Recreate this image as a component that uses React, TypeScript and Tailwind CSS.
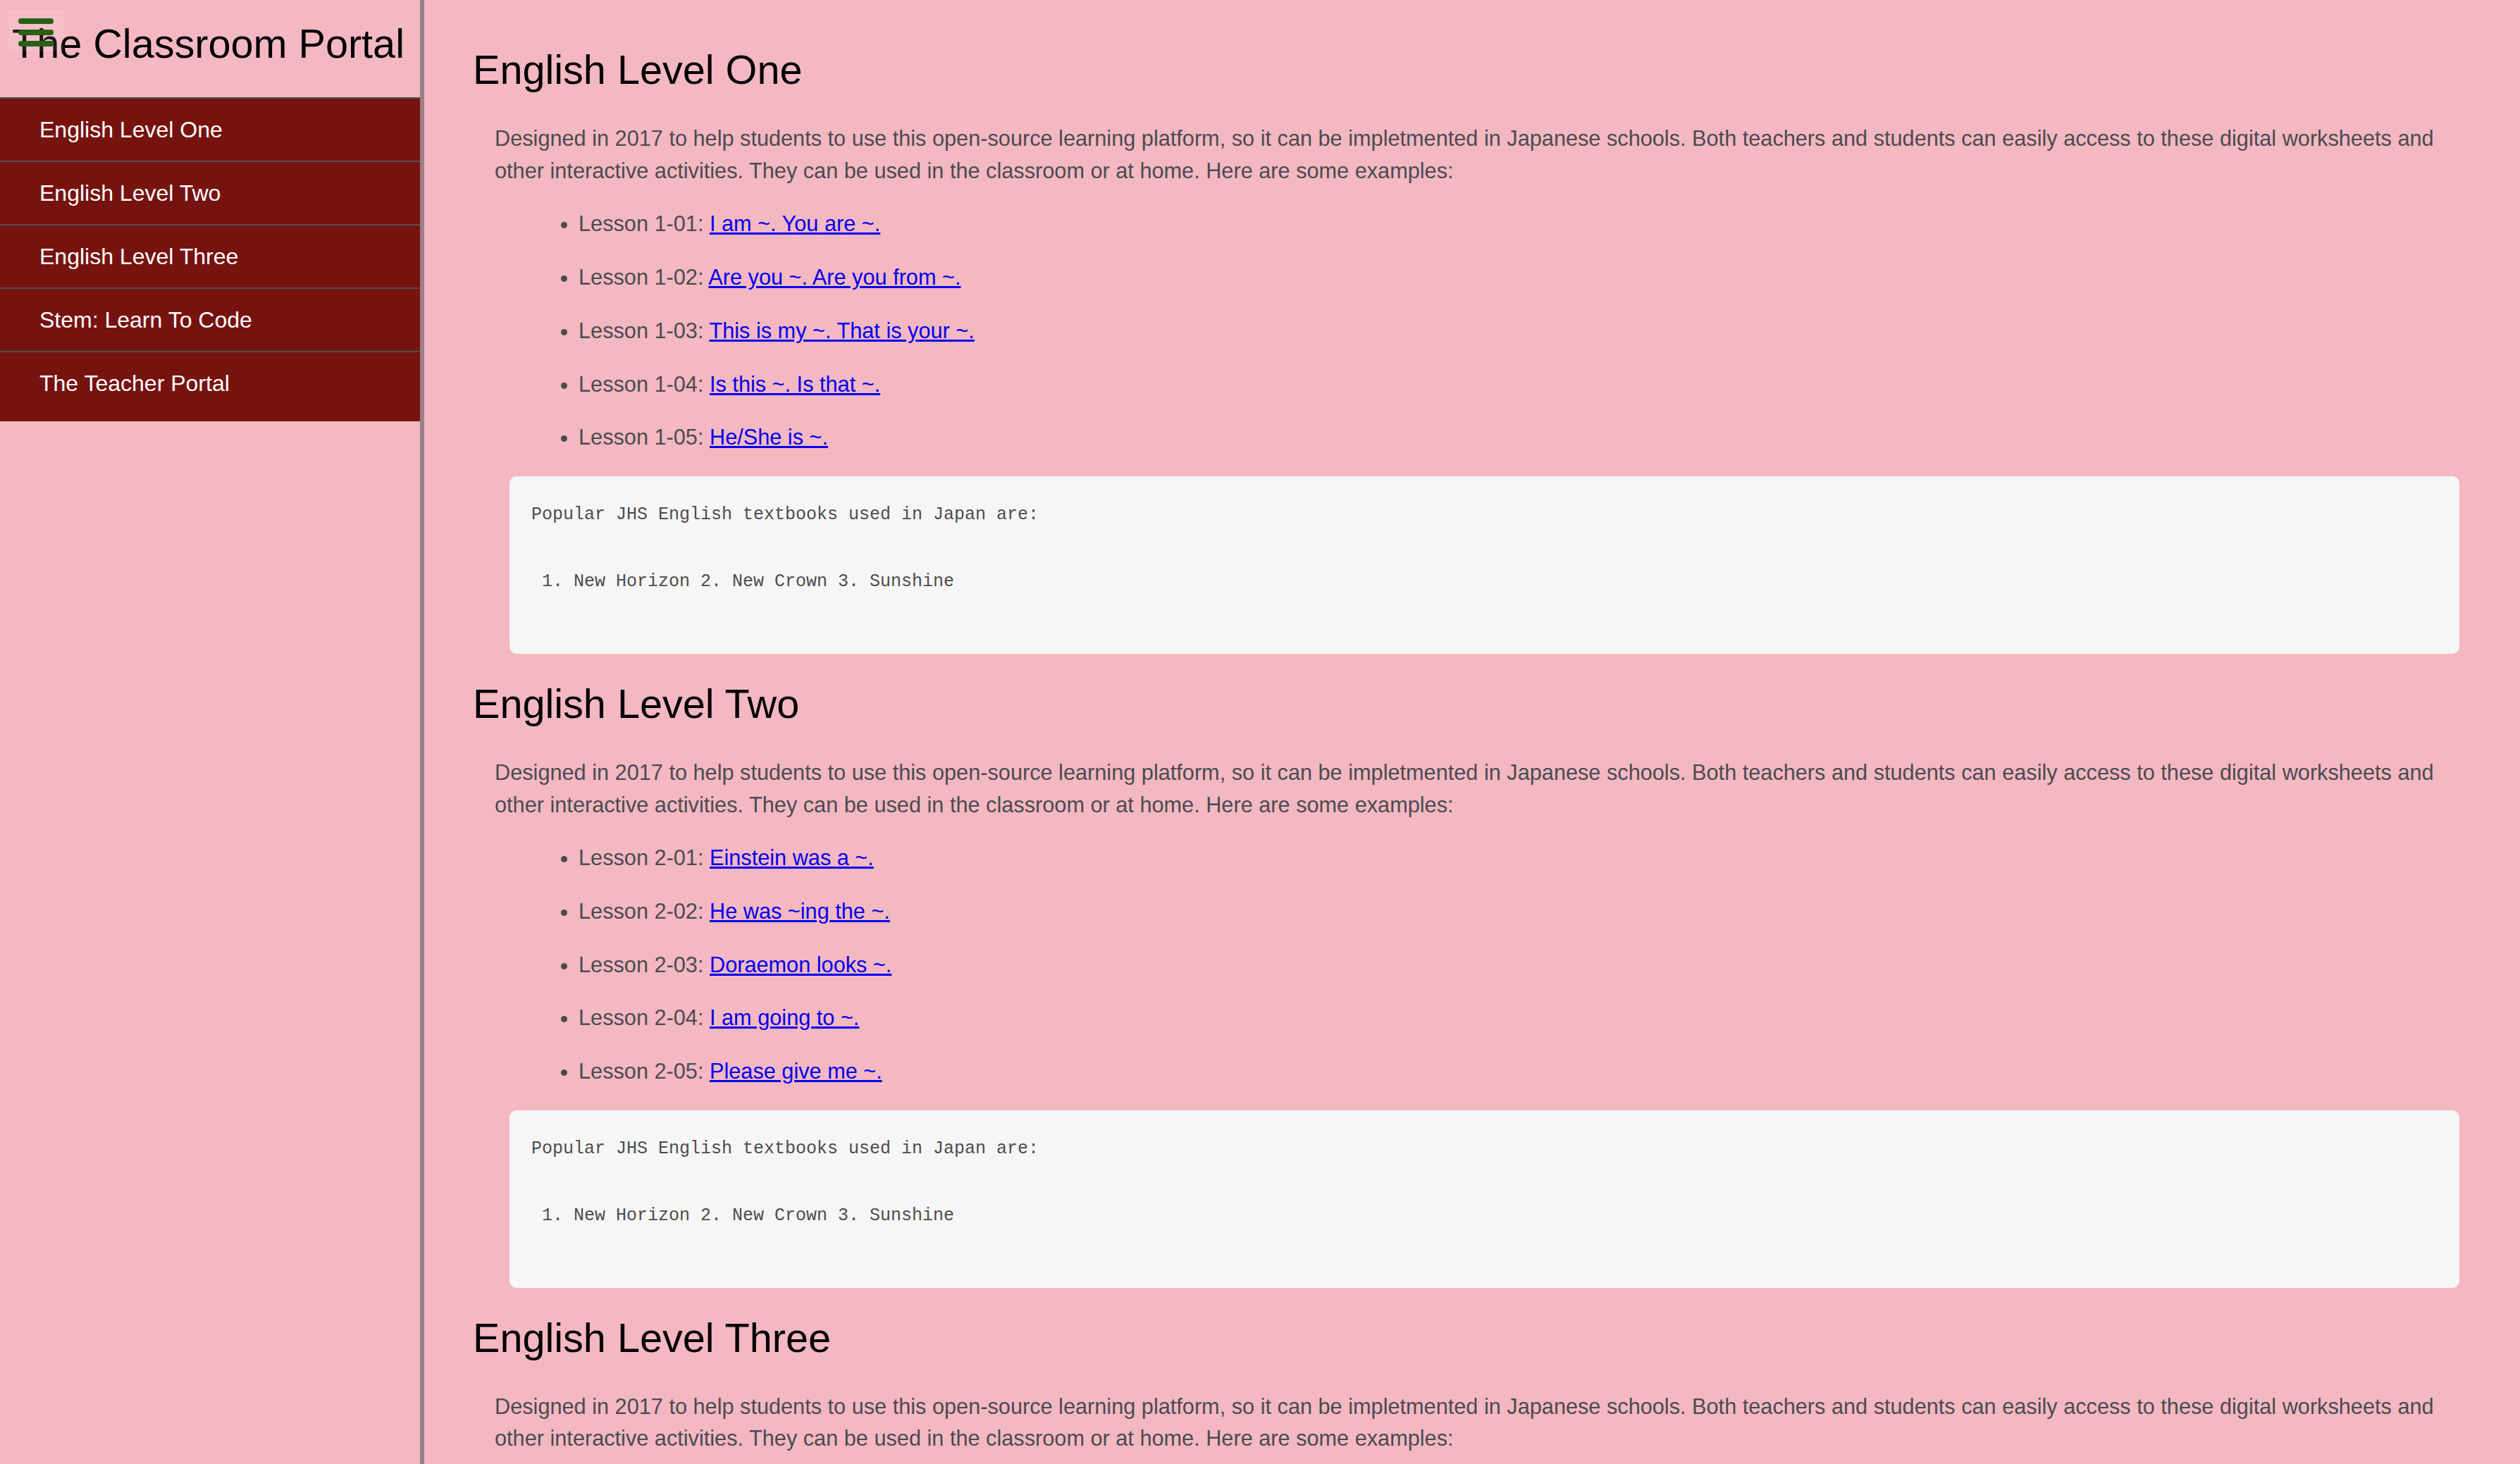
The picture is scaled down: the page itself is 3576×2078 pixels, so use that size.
import React from "react";

const navItems = [
  "English Level One",
  "English Level Two",
  "English Level Three",
  "Stem: Learn To Code",
  "The Teacher Portal",
];

const intro =
  "Designed in 2017 to help students to use this open-source learning platform, so it can be impletmented in Japanese schools. Both teachers and students can easily access to these digital worksheets and other interactive activities. They can be used in the classroom or at home. Here are some examples:";

const sections = [
  {
    title: "English Level One",
    lessons: [
      ["Lesson 1-01:", "I am ~. You are ~."],
      ["Lesson 1-02:", "Are you ~. Are you from ~."],
      ["Lesson 1-03:", "This is my ~. That is your ~."],
      ["Lesson 1-04:", "Is this ~. Is that ~."],
      ["Lesson 1-05:", "He/She is ~."],
    ],
  },
  {
    title: "English Level Two",
    lessons: [
      ["Lesson 2-01:", "Einstein was a ~."],
      ["Lesson 2-02:", "He was ~ing the ~."],
      ["Lesson 2-03:", "Doraemon looks ~."],
      ["Lesson 2-04:", "I am going to ~."],
      ["Lesson 2-05:", "Please give me ~."],
    ],
  },
  {
    title: "English Level Three",
    lessons: [
      ["Lesson 3-01:", "I have been to ~."],
      ["Lesson 3-02:", "It is ~ for me to ~."],
      ["Lesson 3-03:", "The boy who is ~."],
      ["Lesson 3-04:", "I wish I could ~."],
      ["Lesson 3-05:", "This is the book I ~."],
    ],
  },
];

const Section = ({ title, lessons }: { title: string; lessons: string[][] }) => (
  <section className="pb-[38px]">
    <h1 className="text-[57.6px] leading-[66px] text-black">{title}</h1>
    <p className="ml-[31px] mt-[42px] text-[30.7px] leading-[45.6px] text-[#4b4b4f]">
      {intro}
    </p>
    <ul className="mt-[30px] pl-[150px] list-disc flex flex-col gap-[30.2px] text-[30.7px] leading-[45.6px] text-[#4b4b4f]">
      {lessons.map(([label, link]) => (
        <li key={label}>
          {label}{" "}
          <a href="#" className="text-[#0000ee] underline">
            {link}
          </a>
        </li>
      ))}
    </ul>
    {/* textbook note */}
    <pre
      className="ml-[52px] mt-[32px] h-[252px] rounded-[10px] bg-[#f6f6f6] px-[31px] pt-[31px] text-[25px] leading-[47.5px] text-[#4d4d4d]"
      style={{ fontFamily: '"Liberation Mono", monospace' }}
    >
      {"Popular JHS English textbooks used in Japan are:\n\n 1. New Horizon 2. New Crown 3. Sunshine"}
    </pre>
  </section>
);

const App = () => {
  return (
    <div
      className="flex h-screen w-full overflow-hidden bg-[#f4b8c2]"
      style={{ fontFamily: '"Liberation Sans", Arial, sans-serif' }}
    >
      {/* sidebar */}
      <aside className="w-[602px] shrink-0 border-r-[6px] border-[#9b7f86] h-full">
        <div className="relative h-[140px] border-b-2 border-[#505050] pl-[17px] pt-[29px]">
          <h2 className="text-[57.6px] leading-[66px] text-black whitespace-nowrap">
            The Classroom Portal
          </h2>
          <button className="absolute left-[12px] top-[14px] w-[78px] h-[59px] bg-white/10 flex flex-col gap-[8px] pl-[14px] pt-[12px]">
            <span className="block w-[50px] h-[8px] rounded-full bg-[#2a5f16]" />
            <span className="block w-[50px] h-[8px] rounded-full bg-[#2a5f16]" />
            <span className="block w-[50px] h-[8px] rounded-full bg-[#2a5f16]" />
          </button>
        </div>
        <nav className="bg-[#76130f] pb-[10px]">
          {navItems.map((item, i) => (
            <a
              key={item}
              href="#"
              className={`flex h-[88px] items-center pl-[56px] text-[32px] text-white ${
                i > 0 ? "h-[90px] border-t-2 border-[#505050]" : ""
              }`}
            >
              {item}
            </a>
          ))}
        </nav>
      </aside>
      {/* content */}
      <main className="flex-1 pl-[69px] pr-[86px] pt-[66px]">
        {sections.map((s) => (
          <Section key={s.title} title={s.title} lessons={s.lessons} />
        ))}
      </main>
    </div>
  );
};

export default App;
